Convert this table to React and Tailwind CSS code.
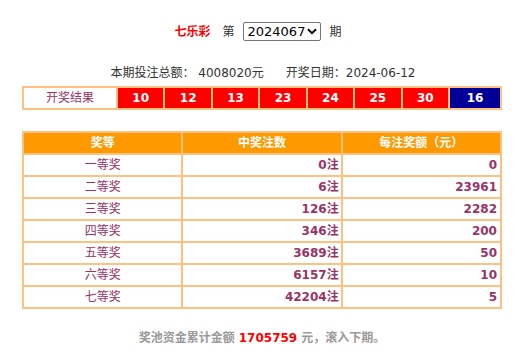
import React from 'react';

const balls = ['10', '12', '13', '23', '24', '25', '30'];

const prizes = [
  { level: '一等奖', count: '0', amount: '0' },
  { level: '二等奖', count: '6', amount: '23961' },
  { level: '三等奖', count: '126', amount: '2282' },
  { level: '四等奖', count: '346', amount: '200' },
  { level: '五等奖', count: '3689', amount: '50' },
  { level: '六等奖', count: '6157', amount: '10' },
  { level: '七等奖', count: '42204', amount: '5' },
];

export default function App() {
  return (
    <div className="w-[524px] h-[363px] bg-white font-['DejaVu_Sans','Noto_Sans_CJK_SC',sans-serif] text-[12px] text-[#333]">
      <div className="w-[480px] mx-auto pt-[22px] flex flex-col">
        {/* Issue picker */}
        <div className="flex items-center justify-center h-[19px] pr-[8px]">
          <span className="text-[#ff0000] font-bold">七乐彩</span>
          <span className="ml-[12px] text-[#333]">第</span>
          <div className="ml-[8px] w-[78px] h-[19px] border border-[#767676] rounded-[2px] flex items-center justify-between pl-[4px] pr-[3px] text-[13px] text-black">
            <span>2024067</span>
            <svg width="10" height="7" viewBox="0 0 10 7">
              <path d="M1 1.2 L5 5.2 L9 1.2" fill="none" stroke="#000" strokeWidth="2" />
            </svg>
          </div>
          <span className="ml-[9px] text-[#333]">期</span>
        </div>

        {/* Sales and date */}
        <div className="mt-[23px] flex justify-center items-center h-[17px] pl-[2px] text-[12px] text-[#333]">
          <span>本期投注总额： 4008020元</span>
          <span className="ml-[22px]">开奖日期：2024-06-12</span>
        </div>

        {/* Winning numbers */}
        <div className="mt-[5px] grid grid-cols-[92px_repeat(7,1fr)_50px] gap-[2px] p-[2px] bg-[#ffc080]">
          <div className="h-[20px] bg-white flex items-center justify-center text-[#993366]">开奖结果</div>
          {balls.map((b) => (
            <div key={b} className="h-[20px] bg-[#ff0000] flex items-center justify-center text-white font-bold">
              {b}
            </div>
          ))}
          <div className="h-[20px] bg-[#000099] flex items-center justify-center text-white font-bold">16</div>
        </div>

        {/* Prize table */}
        <div className="mt-[21px] grid grid-cols-3 gap-[2px] p-[2px] bg-[#ffc080]">
          <div className="h-[20px] bg-[#ff9900] flex items-center justify-center text-white font-bold">奖等</div>
          <div className="h-[20px] bg-[#ff9900] flex items-center justify-center text-white font-bold">中奖注数</div>
          <div className="h-[20px] bg-[#ff9900] flex items-center justify-center text-white font-bold">每注奖额（元）</div>
          {prizes.map((p) => (
            <React.Fragment key={p.level}>
              <div className="h-[20px] bg-white flex items-center justify-center text-[#993366]">{p.level}</div>
              <div className="h-[20px] bg-white flex items-center justify-end pr-[2px] text-[#993366] font-bold">{p.count}注</div>
              <div className="h-[20px] bg-white flex items-center justify-end pr-[3px] text-[#993366] font-bold">{p.amount}</div>
            </React.Fragment>
          ))}
        </div>

        {/* Pool */}
        <div className="mt-[20px] h-[17px] flex items-center justify-center text-[#999] font-bold">
          <span>奖池资金累计金额</span>
          <span className="mx-[4px] text-[#ff0000]">1705759</span>
          <span>元，滚入下期。</span>
        </div>
      </div>
    </div>
  );
}
